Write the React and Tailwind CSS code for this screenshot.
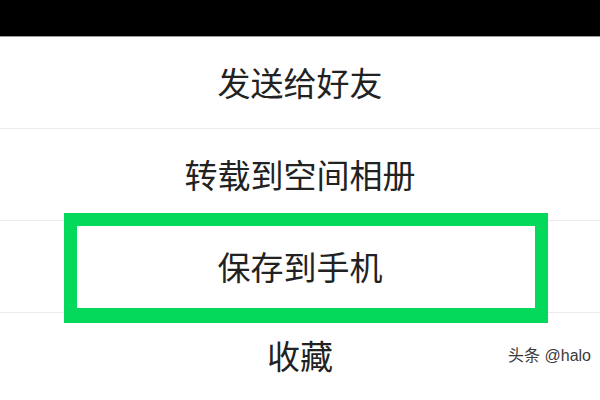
export default function App() {
  const font = { fontFamily: '"Noto Sans CJK SC", "Noto Sans", sans-serif' };
  const rows = ["发送给好友", "转载到空间相册", "保存到手机"];
  return (
    <div className="relative w-[600px] h-[400px] overflow-hidden bg-white" style={font}>
      <div className="h-[37px] bg-black border-b border-[#9a9a9a]" />
      <div className="flex flex-col">
        {rows.map((t) => (
          <div
            key={t}
            className="flex items-center justify-center h-[92px] text-[33px] leading-none text-[#222] border-b border-[#ececec]"
          >
            {t}
          </div>
        ))}
        <div className="flex items-center justify-center h-[84px] text-[33px] leading-none text-[#222]">
          收藏
        </div>
      </div>
      <div className="absolute left-[64px] top-[213px] w-[484px] h-[110px] border-[13px] border-b-[15px] border-[#04d95b]" />
      <div className="absolute right-[9px] top-[344px] text-[16px] text-[#3a3a3a]" style={{ fontFamily: '"Liberation Sans", "Noto Sans CJK SC", sans-serif' }}>
        头条 @halo
      </div>
    </div>
  );
}
